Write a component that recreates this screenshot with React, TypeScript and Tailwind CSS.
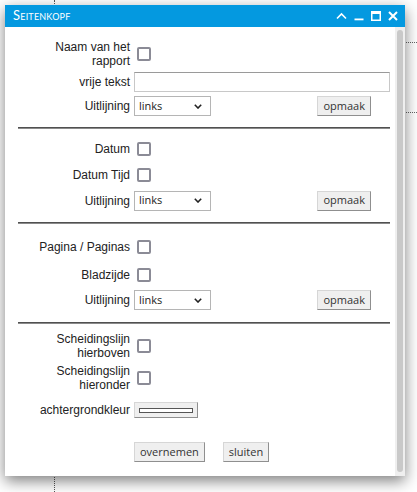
import React from 'react';

const labelFont = { fontFamily: '"Liberation Sans", Arial, sans-serif' };
const uiFont = { fontFamily: '"Open Sans", "Noto Sans", sans-serif' };

function Check() {
    return <div className="ml-[3px] w-[14px] h-[14px] border-2 border-[#8b8b96] rounded-[2px] bg-white" />;
}

function Label({ children }: { children: React.ReactNode }) {
    return (
        <div className="w-[100px] pr-[4px] text-right text-[12px] leading-[14px] text-[#222]" style={labelFont}>
            {children}
        </div>
    );
}

function Select() {
    return (
        <div className="w-[77px] h-[20px] border border-[#b5b5b5] bg-white flex items-center pl-[4px] pr-[8px] text-[11px] text-[#222]" style={uiFont}>
            <span>links</span>
            <svg className="ml-auto" width="8" height="5" viewBox="0 0 8 5">
                <path d="M0.8 0.8 L4 4 L7.2 0.8" fill="none" stroke="#222" strokeWidth="1.6" />
            </svg>
        </div>
    );
}

function Btn({ children, className = '' }: { children: React.ReactNode; className?: string }) {
    return (
        <div
            className={`h-[20px] px-[5px] flex items-center bg-[#efefef] border border-[#d6d6d6] border-r-[#8f8f8f] border-b-[#8f8f8f] text-[11px] text-[#333] ${className}`}
            style={uiFont}
        >
            {children}
        </div>
    );
}

function Row({ h, children }: { h: string; children: React.ReactNode }) {
    return <div className={`flex items-center pl-[29px] pr-[5px] ${h}`}>{children}</div>;
}

function Divider({ className }: { className: string }) {
    return <div className={`ml-[13px] mr-[5px] h-[2px] border-t border-b border-t-[#505050] border-b-[#8a8a8a] ${className}`} />;
}

function UitlijningRow({ h }: { h: string }) {
    return (
        <Row h={h}>
            <Label>Uitlijning</Label>
            <Select />
            <Btn className="ml-auto mr-[19px]">opmaak</Btn>
        </Row>
    );
}

export default function App() {
    return (
        <div className="relative w-[417px] h-[492px] bg-white overflow-hidden">
            {/* page behind the dialog */}
            <div className="absolute left-[54px] top-0 h-full border-l border-dotted border-[#555]" />
            <div className="absolute left-[300px] right-0 top-[42px] border-t border-dotted border-[#666]" />
            <div className="absolute left-[300px] right-0 top-[112px] border-t border-dotted border-[#666]" />

            <div className="absolute left-[5px] top-[5px] w-[400px] h-[471px] flex flex-col bg-white shadow-[0_5px_14px_rgba(0,0,0,0.5)]">
                <div className="h-[22px] bg-[#0499e0] flex items-center pl-[8px] pr-[7px] text-white">
                    <span className="text-[13px] tracking-[0.2px]" style={{ fontFamily: 'Lato, sans-serif', fontVariant: 'small-caps' }}>
                        Seitenkopf
                    </span>
                    <div className="ml-auto flex items-center gap-[7px]">
                        <svg width="11" height="10" viewBox="0 0 11 10">
                            <path d="M1 7.5 L5.5 3 L10 7.5" fill="none" stroke="white" strokeWidth="1.6" />
                        </svg>
                        <svg width="10" height="10" viewBox="0 0 10 10">
                            <rect x="0.5" y="7.5" width="9" height="1.8" fill="white" />
                        </svg>
                        <svg width="10" height="10" viewBox="0 0 10 10">
                            <rect x="0.75" y="0.75" width="8.5" height="8.5" fill="none" stroke="white" strokeWidth="1.5" />
                            <rect x="0" y="0" width="10" height="3" fill="white" />
                        </svg>
                        <svg width="10" height="10" viewBox="0 0 10 10">
                            <path d="M1 1 L9 9 M9 1 L1 9" fill="none" stroke="white" strokeWidth="2" />
                        </svg>
                    </div>
                </div>

                <div className="flex flex-1">
                    <div className="flex-1 flex flex-col">
                        <div className="pt-[11px]" />
                        <Row h="h-[32px]">
                            <Label>Naam van het rapport</Label>
                            <Check />
                        </Row>
                        <Row h="h-[24px]">
                            <Label>vrije tekst</Label>
                            <div className="w-[256px] h-[20px] border border-[#c8c8c8] border-t-[#9a9a9a] bg-white" />
                        </Row>
                        <UitlijningRow h="h-[24px]" />
                        <Divider className="mt-[9px]" />

                        <div className="pt-[7px]" />
                        <Row h="h-[26px]">
                            <Label>Datum</Label>
                            <Check />
                        </Row>
                        <Row h="h-[26px]">
                            <Label>Datum Tijd</Label>
                            <Check />
                        </Row>
                        <UitlijningRow h="h-[25px]" />
                        <Divider className="mt-[9px]" />

                        <div className="pt-[9px]" />
                        <Row h="h-[27px]">
                            <Label>Pagina / Paginas</Label>
                            <Check />
                        </Row>
                        <Row h="h-[30px]">
                            <Label>Bladzijde</Label>
                            <Check />
                        </Row>
                        <UitlijningRow h="h-[20px]" />
                        <Divider className="mt-[12px]" />

                        <div className="pt-[7px]" />
                        <Row h="h-[30px]">
                            <Label>Scheidingslijn hierboven</Label>
                            <Check />
                        </Row>
                        <Row h="h-[33px]">
                            <Label>Scheidingslijn hieronder</Label>
                            <Check />
                        </Row>
                        <Row h="h-[32px]">
                            <Label>achtergrondkleur</Label>
                            <div className="w-[64px] h-[16px] bg-[#efefef] border border-[#d6d6d6] border-r-[#8f8f8f] border-b-[#8f8f8f] flex items-center justify-center">
                                <div className="w-[54px] h-[5px] bg-white border border-[#555]" />
                            </div>
                        </Row>

                        <div className="flex items-center mt-[16px] pl-[129px] gap-[18px]">
                            <Btn>overnemen</Btn>
                            <Btn>sluiten</Btn>
                        </div>
                    </div>

                    <div className="w-[10px] bg-[#efefef] flex justify-center pt-[3px] pb-[4px]">
                        <div className="w-[6px] h-full rounded-[3px] bg-[#c9c9c9]" />
                    </div>
                </div>
            </div>
        </div>
    );
}
